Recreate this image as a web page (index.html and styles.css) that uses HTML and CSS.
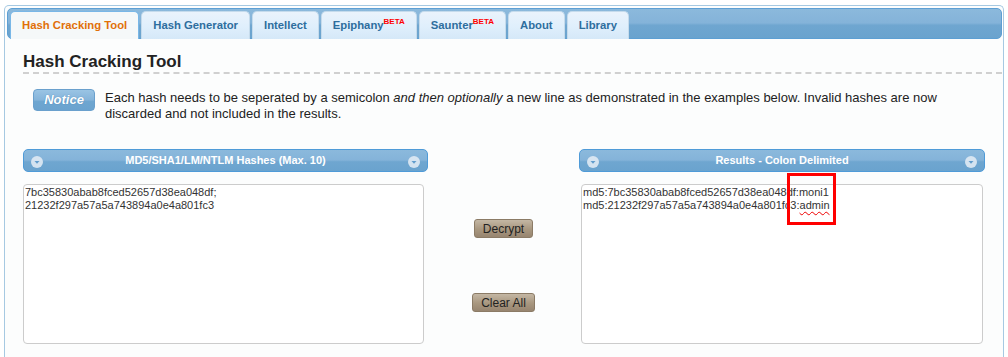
FILE: index.html
```html
<!DOCTYPE html>
<html lang="en">
<head>
    <meta charset="UTF-8">
    <title>Hash Cracking Tool</title>
    <link rel="stylesheet" href="styles.css">
</head>
<body>

    <div class="wrap">
        <!-- tab strip -->
        <ul class="tabs">
            <li class="tab active">Hash Cracking Tool</li>
            <li class="tab">Hash Generator</li>
            <li class="tab">Intellect</li>
            <li class="tab">Epiphany<sup>BETA</sup></li>
            <li class="tab">Saunter<sup>BETA</sup></li>
            <li class="tab">About</li>
            <li class="tab">Library</li>
        </ul>

        <div class="page">
            <h1>Hash Cracking Tool</h1>

            <div class="notice-row">
                <span class="notice">Notice</span>
                <p>Each hash needs to be seperated by a semicolon <em>and then optionally</em> a new line as demonstrated in the examples below. Invalid hashes are now discarded and not included in the results.</p>
            </div>

            <div class="tool">
                <div class="col">
                    <div class="bar">
                        <svg class="ico" viewBox="0 0 12 12"><circle cx="6" cy="6" r="6" fill="#e6eef6"/><path d="M3.5 5h5L6 7.8z" fill="#5f9bcc"/></svg>
                        <span>MD5/SHA1/LM/NTLM Hashes (Max. 10)</span>
                        <svg class="ico" viewBox="0 0 12 12"><circle cx="6" cy="6" r="6" fill="#e6eef6"/><path d="M3.5 5h5L6 7.8z" fill="#5f9bcc"/></svg>
                    </div>
                    <textarea class="box">7bc35830abab8fced52657d38ea048df;
21232f297a57a5a743894a0e4a801fc3</textarea>
                </div>

                <div class="mid">
                    <button class="btn">Decrypt</button>
                    <button class="btn">Clear All</button>
                </div>

                <div class="col">
                    <div class="bar">
                        <svg class="ico" viewBox="0 0 12 12"><circle cx="6" cy="6" r="6" fill="#e6eef6"/><path d="M3.5 5h5L6 7.8z" fill="#5f9bcc"/></svg>
                        <span>Results - Colon Delimited</span>
                        <svg class="ico" viewBox="0 0 12 12"><circle cx="6" cy="6" r="6" fill="#e6eef6"/><path d="M3.5 5h5L6 7.8z" fill="#5f9bcc"/></svg>
                    </div>
                    <div class="box out">
                        md5:7bc35830abab8fced52657d38ea048df:moni1<br>
                        md5:21232f297a57a5a743894a0e4a801fc3:<span class="typo">admin</span>
                        <!-- highlight drawn over the result -->
                        <span class="mark"></span>
                    </div>
                </div>
            </div>
        </div>
    </div>

</body>
</html>
```

FILE: styles.css
```css
body {
    margin: 0;
    background: #fff;
    font-family: "Liberation Sans", Arial, sans-serif;
    color: #222;
}

.wrap {
    margin: 5px 4px 0 4px;
    min-height: 352px;
    box-sizing: border-box;
    border: 1px solid #a6c9e2;
    border-bottom: none;
    border-radius: 5px 5px 0 0;
    background: #fcfdfd;
    padding: 2px 1px 0 2px;
}

/* tab strip */
.tabs {
    list-style: none;
    margin: 0;
    padding: 2px 0 0 2px;
    height: 27px;
    display: flex;
    align-items: flex-end;
    border: 1px solid #5d9fd3;
    border-radius: 5px;
    background: linear-gradient(#8bb9dc, #84b3d9 48%, #6fa6d0 56%, #6aa3ce);
}

.tab {
    height: 27px;
    line-height: 27px;
    padding: 0 11px;
    margin-right: 2px;
    margin-bottom: -1px;
    font-size: 11.3px;
    font-weight: bold;
    color: #2e6e9e;
    border: 1px solid #c5dbec;
    border-bottom: none;
    border-radius: 5px 5px 0 0;
    background: linear-gradient(#eaf3fc, #dfeffc 55%, #d5e8f8);
}

.tab.active {
    color: #e17009;
    background: #f5f8f9;
    border-color: #79b7e7;
}

.tab sup {
    color: #f00;
    font-size: 8px;
    vertical-align: 5px;
    line-height: 0;
}

.page {
    padding: 0 0 0 16px;
}

h1 {
    margin: 13px 0 0 0;
    font-size: 17px;
    line-height: 20px;
    color: #222;
    border-bottom: 2px dashed #d0d0d0;
}

/* notice line */
.notice-row {
    display: flex;
    align-items: flex-start;
    margin: 15px 0 0 10px;
}

.notice {
    flex: none;
    width: 60px;
    height: 20px;
    line-height: 20px;
    text-align: center;
    font-size: 13px;
    font-weight: bold;
    font-style: italic;
    color: #fff;
    text-shadow: 0 0 1px #3a78ad;
    border: 1px solid #6aa0cd;
    border-radius: 4px;
    background: linear-gradient(#9ac4e4, #85b4da 50%, #6ea6d0 56%, #6ba3cf);
}

.notice-row p {
    margin: 1px 12px 0 10px;
    font-size: 13px;
    line-height: 16px;
    color: #222;
}

/* input / output */
.tool {
    display: flex;
    margin-top: 27px;
}

.col {
    width: 405px;
}

.col + .mid + .col {
    width: 406px;
}

.bar {
    height: 21px;
    display: flex;
    align-items: center;
    padding: 0 7px;
    border: 1px solid #4f9bd8;
    border-radius: 5px;
    background: linear-gradient(#8bb9dc, #84b3d9 48%, #6fa6d0 56%, #6aa3ce);
    color: #fff;
    font-size: 11px;
    font-weight: bold;
}

.bar span {
    flex: 1;
    text-align: center;
    margin-top: -2px;
}

.ico {
    width: 12px;
    height: 12px;
    margin-top: 3px;
    opacity: 0.85;
}

.box {
    display: block;
    box-sizing: border-box;
    width: 401px;
    height: 160px;
    margin-top: 12px;
    padding: 1px 1px;
    border: 1px solid #ccc;
    border-radius: 4px;
    background: #fff;
    font-family: "Liberation Sans", Arial, sans-serif;
    font-size: 11px;
    line-height: 13px;
    color: #333;
    resize: none;
}

.out {
    position: relative;
    width: 402px;
    margin-left: 2px;
}

.typo {
    text-decoration: underline wavy #e00;
    text-decoration-thickness: 1px;
    text-underline-offset: 2px;
}

.mark {
    position: absolute;
    left: 205px;
    top: -12px;
    width: 43px;
    height: 46px;
    border: 3px solid #f00;
}

.mid {
    width: 151px;
    display: flex;
    flex-direction: column;
    align-items: center;
    padding-top: 70px;
    gap: 55px;
}

.btn {
    height: 19px;
    padding: 0 8px;
    font-family: "Liberation Sans", Arial, sans-serif;
    font-size: 12px;
    color: #222;
    border: 1px solid #8b7b66;
    border-radius: 3px;
    background: linear-gradient(#c4b7a4, #a8977f 55%, #978570);
}
```
